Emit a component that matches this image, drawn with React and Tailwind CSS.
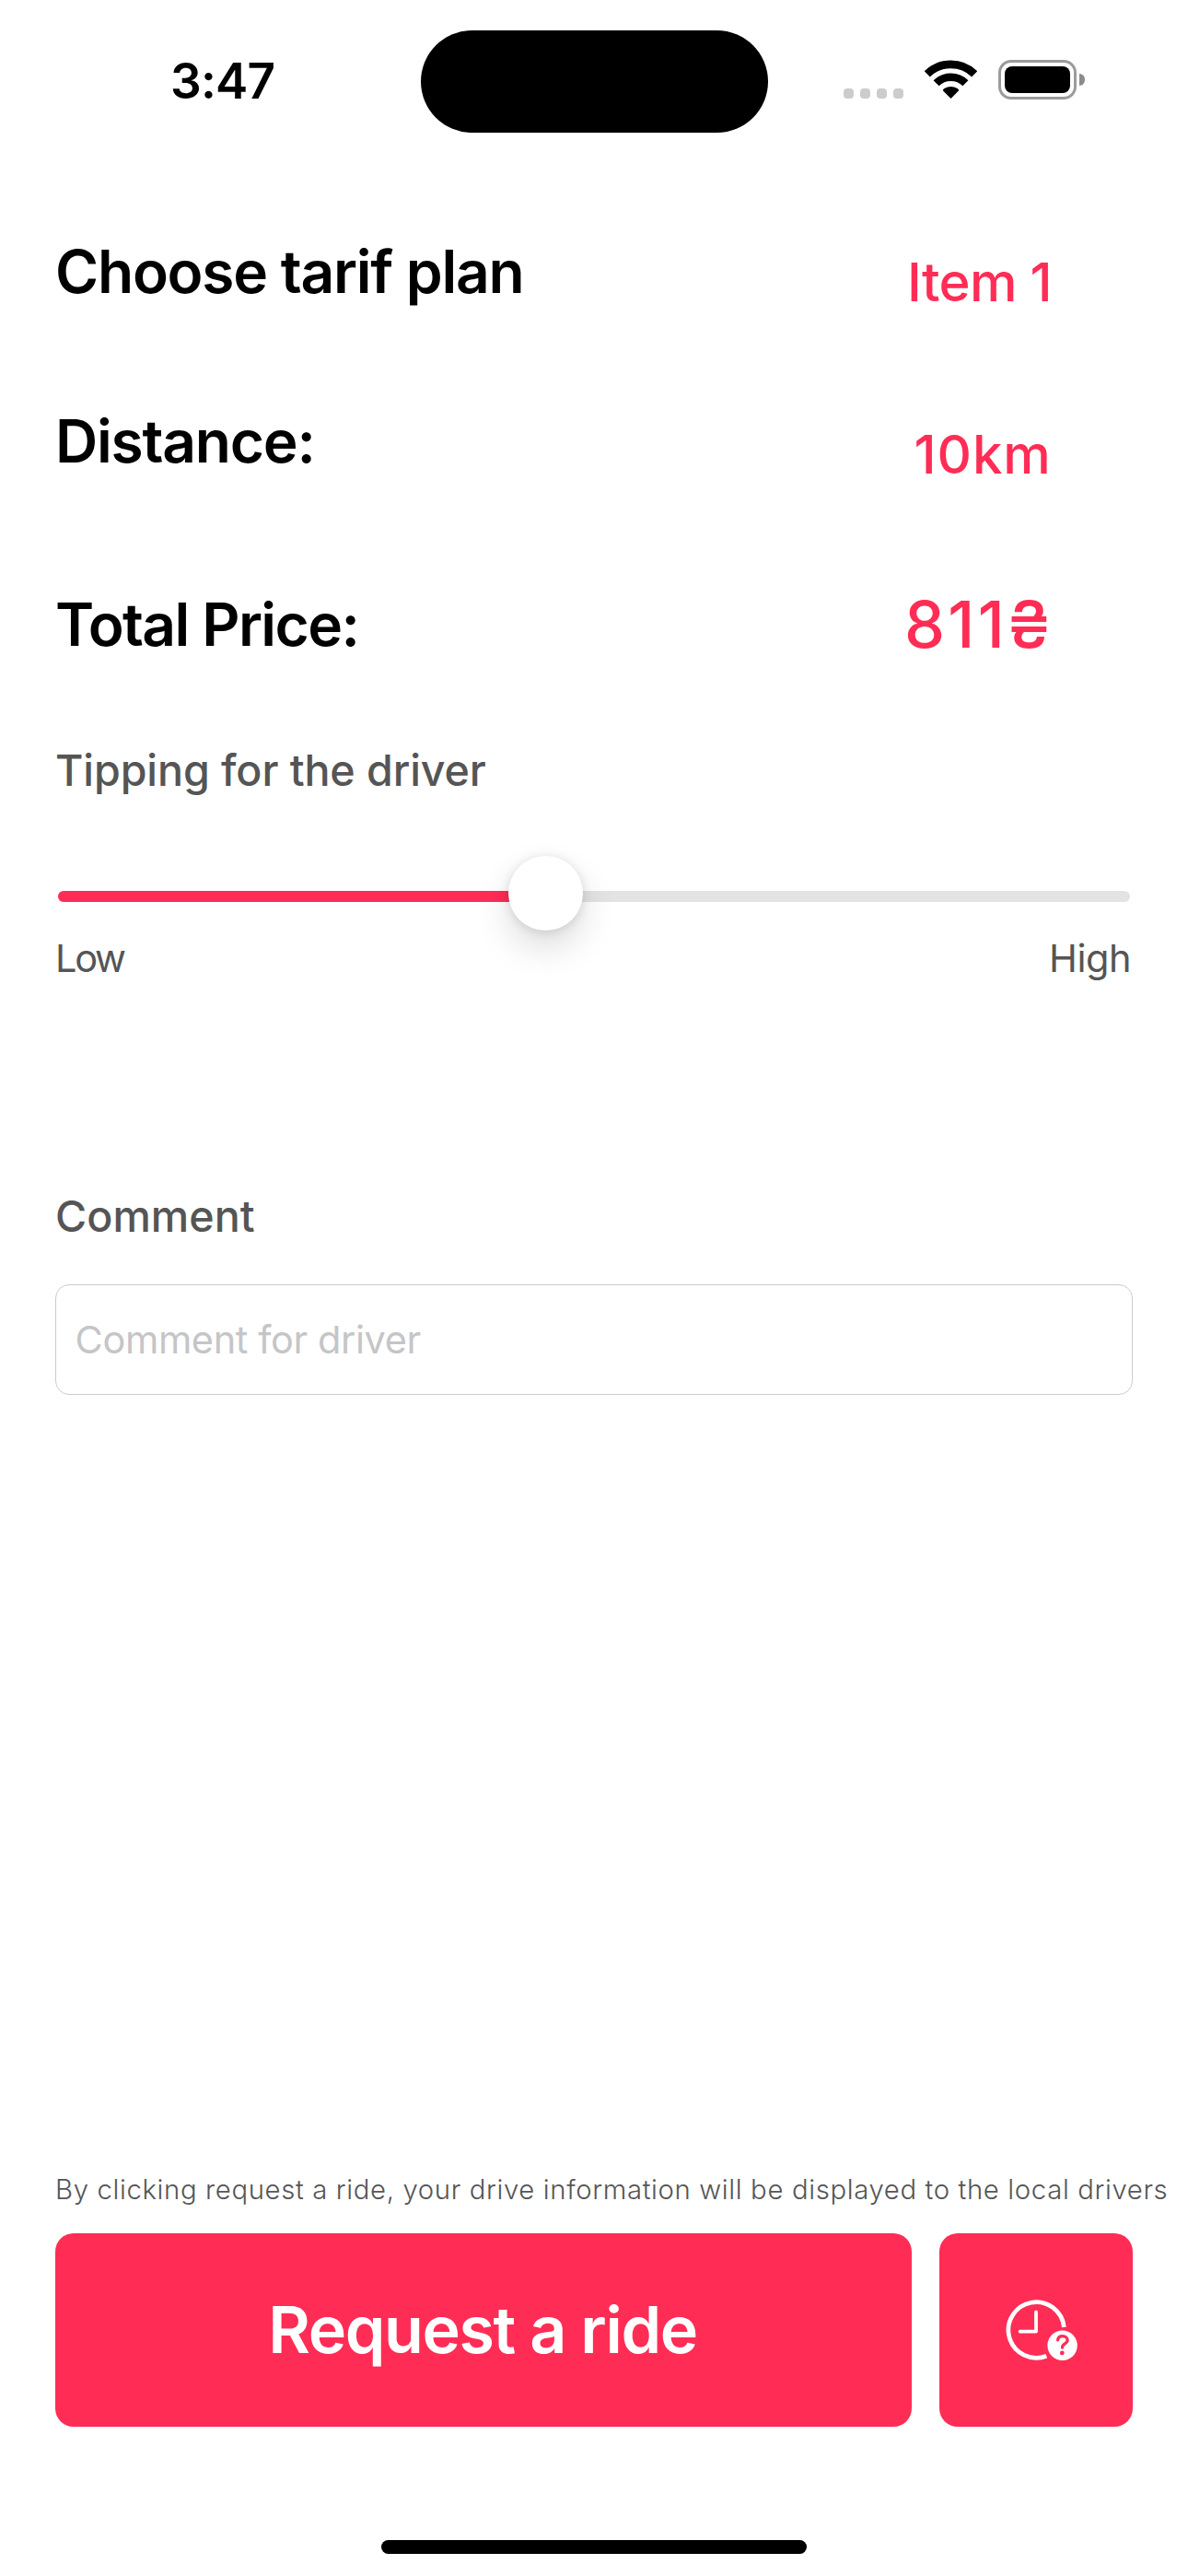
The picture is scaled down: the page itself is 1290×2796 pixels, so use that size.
const tariffRows = [
  {
    label: "Choose tarif plan",
    value: "Item 1",
    row: "mt-[78px] h-[87px]",
    labelStyle: "tracking-[-1.23px]",
    valueStyle: "mt-[15px] pl-[3px] text-[58px] leading-[72px] tracking-[-0.65px]",
  },
  {
    label: "Distance:",
    value: "10km",
    row: "mt-24 h-[91px]",
    labelStyle: "mt-px tracking-[-1.2px]",
    valueStyle: "mt-[19px] pl-[10.5px] text-[58px] leading-[72px] tracking-[0.95px]",
  },
  {
    label: "Total Price:",
    value: "811₴",
    row: "mt-[107px] h-[84px]",
    labelStyle: "mt-[2px] tracking-[-1.59px]",
    valueStyle: "text-[70px] leading-[84px] tracking-[3.28px]",
  },
];

function WifiIcon() {
  return (
    <svg className="ml-[23px] mt-[65px] h-[42px] w-[57px]" viewBox="0 0 57 42">
      <g fill="none" stroke="#000" strokeWidth="8.6">
        <path d="M2.8 15.3A36.8 36.8 0 0 1 54.2 15.3" />
        <path d="M12.6 25.3A22.6 22.6 0 0 1 44.4 25.3" />
      </g>
      <path d="M28.5 42 19.8 33.2Q20 31.8 21.4 31Q28.5 27 35.6 31Q37 31.8 37.2 33.2Z" />
    </svg>
  );
}

function StatusBar() {
  return (
    <header className="flex h-[177px] shrink-0 items-start">
      <time className="mt-14 w-[457px] pl-[185px] text-[53px] leading-[64px] font-semibold tracking-[-0.84px]">
        3:47
      </time>
      <div className="mt-[33px] h-[111px] w-[377px] rounded-full bg-black" />
      <div className="mt-24 ml-[82px] flex gap-[7px]">
        {[0, 1, 2, 3].map((dot) => (
          <span key={dot} className="h-[11px] w-[11px] rounded-[4px] bg-[#cccccc]" />
        ))}
      </div>
      <WifiIcon />
      <div className="mt-[65px] ml-[23px] flex items-center gap-[3px]">
        <div className="h-[43px] w-[85px] rounded-[14px] border-[3px] border-[#9b9b9b] p-[4px]">
          <div className="h-full w-full rounded-[8px] bg-black" />
        </div>
        <div className="h-[13px] w-[5.5px] rounded-r-full bg-[#8c8c8c]" />
      </div>
    </header>
  );
}

function TipSlider() {
  return (
    <div className="mt-[65px] flex h-[81px] items-center pr-[3px] pl-[3px]">
      <div className="relative mt-[7px] h-3 w-full rounded-full bg-[#e3e3e5]">
        <div className="h-3 w-[530px] rounded-full bg-[#ff2d55]" />
        <div className="absolute top-[-38px] left-[489px] h-[81px] w-[81px] rounded-full bg-white shadow-[0_1.5px_12px_rgba(0,0,0,0.12),0_18px_39px_rgba(0,0,0,0.14)]" />
      </div>
    </div>
  );
}

function ClockQuestionIcon() {
  return (
    <svg className="h-[68px] w-[82px]" viewBox="0 0 82 68" fill="none" strokeLinejoin="round">
      <path d="M65.4 31A30.3 30.3 0 1 0 46.3 62.2" stroke="#fff" strokeWidth="4.7" />
      <path d="M35 14.5V35.6H17.6" stroke="#fff" strokeWidth="3.8" strokeLinecap="round" />
      <circle cx="63.6" cy="50.8" r="16.2" fill="#fff" />
      <path
        d="M58.6 44.8C58.9 41.8 61 40.7 63.9 40.7C67 40.7 69.1 42.5 69.1 45.1C69.1 49.2 63.5 48.8 63.5 53"
        stroke="#ff2d55"
        strokeWidth="3.3"
        strokeLinecap="round"
      />
      <circle cx="63.3" cy="58.9" r="2.4" fill="#ff2d55" />
    </svg>
  );
}

export default function App() {
  return (
    <div className="flex h-[2796px] w-[1290px] flex-col overflow-hidden bg-white font-['Inter','Liberation_Sans',sans-serif] text-black">
      <StatusBar />

      <main className="flex flex-1 flex-col px-[60px]">
        {tariffRows.map(({ label, value, row, labelStyle, valueStyle }) => (
          <div key={label} className={`flex items-start justify-between ${row}`}>
            <h2 className={`text-[64px] leading-[80px] font-semibold ${labelStyle}`}>{label}</h2>
            <div className={`w-[248px] font-medium whitespace-nowrap text-[#ff2d55] ${valueStyle}`}>{value}</div>
          </div>
        ))}

        <section className="mt-[88px] text-[#555555]">
          <h3 className="text-[46.6px] leading-[56px] font-medium tracking-[-0.1px]">Tipping for the driver</h3>
          <TipSlider />
          <div className="mt-[5px] flex justify-between pr-[2px] text-[41.5px] leading-[50px]">
            <span className="tracking-[-2.3px]">Low</span>
            <span className="tracking-[-0.5px]">High</span>
          </div>
        </section>

        <section className="mt-[227px]">
          <h3 className="text-[46.6px] leading-[56px] font-medium tracking-[0.05px] text-[#555555]">Comment</h3>
          <input
            type="text"
            placeholder="Comment for driver"
            className="mt-[46px] block h-[120px] w-full rounded-[15px] border border-[#cccccc] px-[20.5px] text-[41.5px] leading-[50px] tracking-[-0.39px] placeholder:text-[#c5c5c7] placeholder:opacity-100"
          />
        </section>

        <footer className="mt-auto mb-[123px]">
          <p className="text-[29.3px] leading-[36px] font-light tracking-[0.64px] whitespace-nowrap text-[#555555]">
            By clicking request a ride, your drive information will be displayed to the local drivers
          </p>
          <div className="mt-[29px] flex gap-[30px]">
            <button className="h-[210px] flex-1 rounded-[20px] bg-[#ff2d55] pr-[2px] text-[70px] leading-[84px] font-semibold tracking-[-1.36px] text-white">
              Request a ride
            </button>
            <button className="flex h-[210px] w-[210px] items-center justify-center rounded-[20px] bg-[#ff2d55] pl-[11px]">
              <ClockQuestionIcon />
            </button>
          </div>
        </footer>
      </main>

      <div className="mb-6 h-[15px] w-[462px] shrink-0 self-center rounded-full bg-black" />
    </div>
  );
}
